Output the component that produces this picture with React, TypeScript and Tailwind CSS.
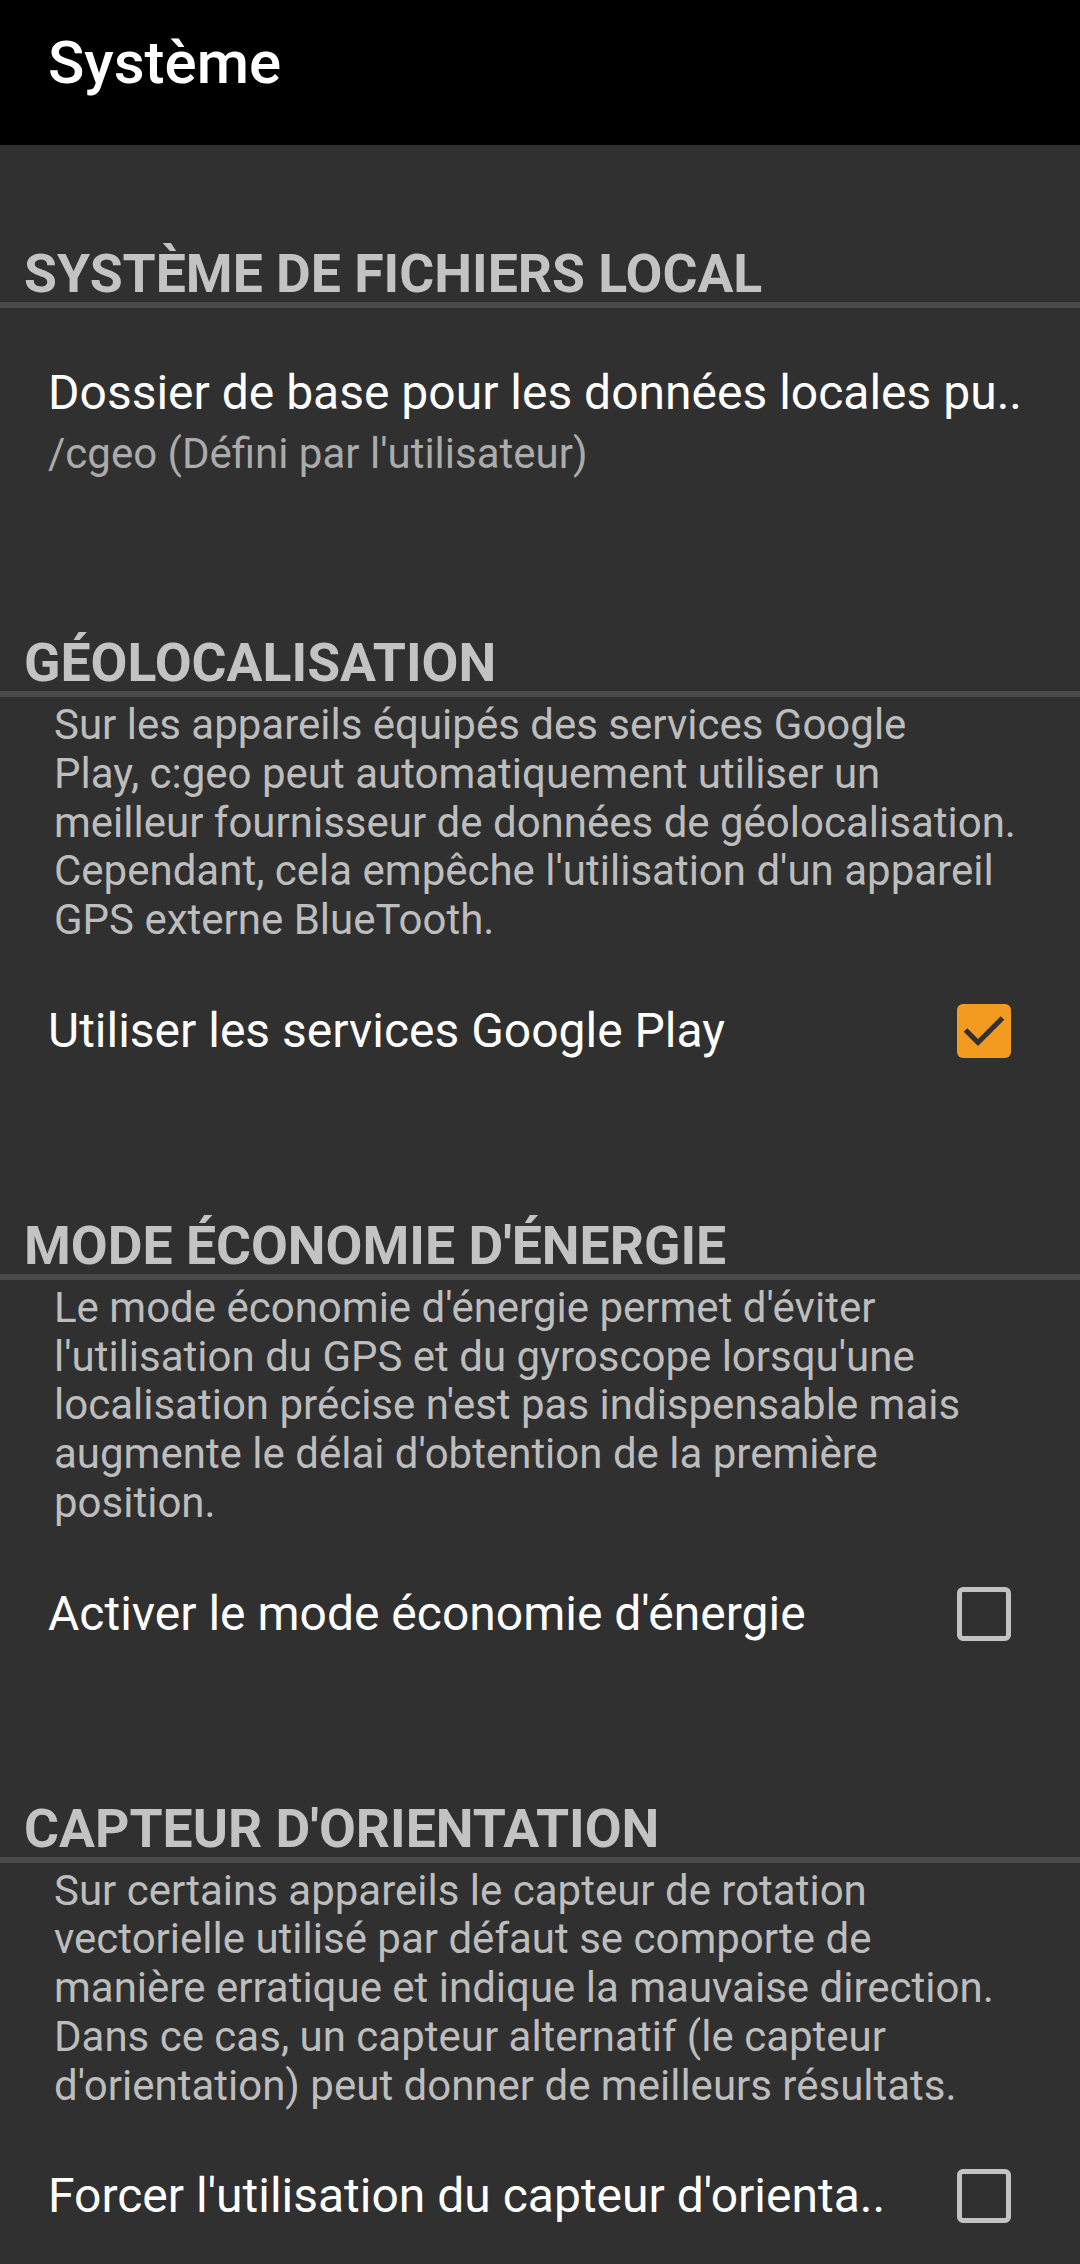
import type { ReactNode } from 'react';

const font = { fontFamily: 'Roboto, "Noto Sans", sans-serif' };

function Category({ title }: { title: string }) {
  return (
    <div className="pt-[105px]">
      <h2 className="pl-[24px] text-[53.5px] font-bold leading-[48px] whitespace-nowrap text-[#c3c3c3]">
        {title}
      </h2>
      <div className="mt-[4px] h-[6px] bg-[#4a4a4a]" />
    </div>
  );
}

function Description({ lines }: { lines: string[] }) {
  return (
    <p className="pt-[4px] pl-[54px] text-[42px] leading-[48.75px] whitespace-nowrap text-[#bdbdbd]">
      {lines.map((line, i) => (
        <span key={i} className="block">
          {line}
        </span>
      ))}
    </p>
  );
}

function CheckBox({ checked }: { checked: boolean }) {
  if (checked) {
    return (
      <div className="h-[54px] w-[54px] rounded-[6px] bg-[#f39a21]">
        <svg width="54" height="54" viewBox="0 0 54 54">
          <path
            d="M8.5 26 L21 38.5 L45.5 14"
            fill="none"
            stroke="#303030"
            strokeWidth="5"
          />
        </svg>
      </div>
    );
  }
  return (
    <div className="h-[54px] w-[54px] rounded-[6px] border-[5px] border-[#c2c2c2]" />
  );
}

function CheckRow({ label, checked }: { label: string; checked: boolean }) {
  return (
    <div className="flex h-[172px] items-center justify-between pl-[48px] pr-[69px]">
      <span className="text-[48px] leading-[48px] whitespace-nowrap text-white">
        {label}
      </span>
      <CheckBox checked={checked} />
    </div>
  );
}

function Section({ title, children }: { title: string; children: ReactNode }) {
  return (
    <section>
      <Category title={title} />
      {children}
    </section>
  );
}

export default function App() {
  return (
    <div
      className="h-[2264px] w-[1080px] overflow-hidden bg-[#303030]"
      style={font}
    >
      <header className="h-[145px] bg-black pt-[33px] pl-[48px]">
        <h1 className="text-[60px] font-medium leading-[60px] text-white">
          Système
        </h1>
      </header>

      <Section title="SYSTÈME DE FICHIERS LOCAL">
        <div className="pt-[61px] pb-[56px] pl-[48px]">
          <div className="text-[48px] leading-[48px] whitespace-nowrap text-white">
            Dossier de base pour les données locales pu..
          </div>
          <div className="mt-[12px] text-[42px] leading-[49px] text-[#ababab]">
            /cgeo (Défini par l'utilisateur)
          </div>
        </div>
      </Section>

      <Section title="GÉOLOCALISATION">
        <Description
          lines={[
            'Sur les appareils équipés des services Google',
            'Play, c:geo peut automatiquement utiliser un',
            'meilleur fournisseur de données de géolocalisation.',
            "Cependant, cela empêche l'utilisation d'un appareil",
            'GPS externe BlueTooth.',
          ]}
        />
        <CheckRow label="Utiliser les services Google Play" checked />
      </Section>

      <Section title="MODE ÉCONOMIE D'ÉNERGIE">
        <Description
          lines={[
            "Le mode économie d'énergie permet d'éviter",
            "l'utilisation du GPS et du gyroscope lorsqu'une",
            "localisation précise n'est pas indispensable mais",
            "augmente le délai d'obtention de la première",
            'position.',
          ]}
        />
        <CheckRow label="Activer le mode économie d'énergie" checked={false} />
      </Section>

      <Section title="CAPTEUR D'ORIENTATION">
        <Description
          lines={[
            'Sur certains appareils le capteur de rotation',
            'vectorielle utilisé par défaut se comporte de',
            'manière erratique et indique la mauvaise direction.',
            'Dans ce cas, un capteur alternatif (le capteur',
            "d'orientation) peut donner de meilleurs résultats.",
          ]}
        />
        <CheckRow
          label="Forcer l'utilisation du capteur d'orienta.."
          checked={false}
        />
      </Section>
    </div>
  );
}
